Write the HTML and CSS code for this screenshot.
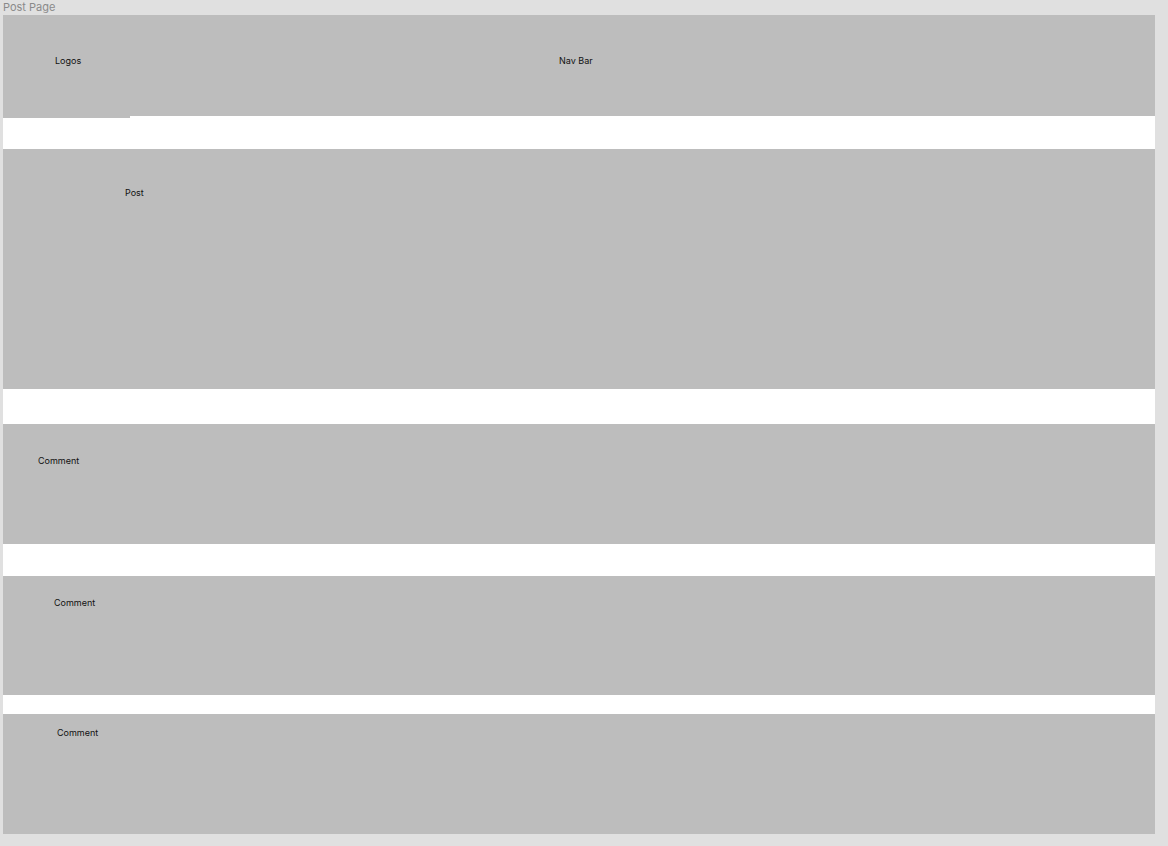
FILE: index.html
```html
<!DOCTYPE html>
<html lang="en">
<head>
    <meta charset="UTF-8">
    <meta name="viewport" content="width=device-width, initial-scale=1.0">
    <title>Post Page</title>
    <link rel="stylesheet" href="styles.css">
</head>
<body>
    <div class="frame-title">Post Page</div>

    <div class="frame">
        <!-- Header -->
        <header class="header">
            <div class="logos">Logos</div>
            <nav class="nav-bar">Nav Bar</nav>
        </header>

        <!-- Post -->
        <section class="block post">Post</section>

        <!-- Comments -->
        <section class="block comment comment-1">Comment</section>
        <section class="block comment comment-2">Comment</section>
        <section class="block comment comment-3">Comment</section>
    </div>
</body>
</html>
```

FILE: styles.css
```css
body {
    margin: 0;
    background-color: #e0e0e0;
    font-family: Inter, "Noto Sans", sans-serif;
}
.frame-title {
    height: 15px;
    padding-left: 3px;
    font-size: 11px;
    line-height: 14px;
    color: #8a8a8a;
}
.frame {
    margin-left: 3px;
    width: 1152px;
    height: 819px;
    background-color: #ffffff;
}
.header {
    display: flex;
    align-items: flex-start;
    height: 101px;
}
.logos,
.nav-bar,
.block {
    background-color: #bdbdbd;
    box-sizing: border-box;
    font-size: 9px;
    line-height: 11px;
    color: #111;
}
.logos {
    width: 127px;
    height: 103px;
    padding: 40px 0 0 52px;
    position: relative;
    z-index: 1;
}
.nav-bar {
    flex: 1;
    height: 101px;
    padding: 40px 0 0 429px;
}
.post {
    margin-top: 33px;
    height: 240px;
    padding: 38px 0 0 122px;
}
.comment {
    height: 120px;
}
.comment-1 {
    margin-top: 35px;
    padding: 31px 0 0 35px;
}
.comment-2 {
    margin-top: 32px;
    height: 119px;
    padding: 21px 0 0 51px;
}
.comment-3 {
    margin-top: 19px;
    padding: 13px 0 0 54px;
}
```
